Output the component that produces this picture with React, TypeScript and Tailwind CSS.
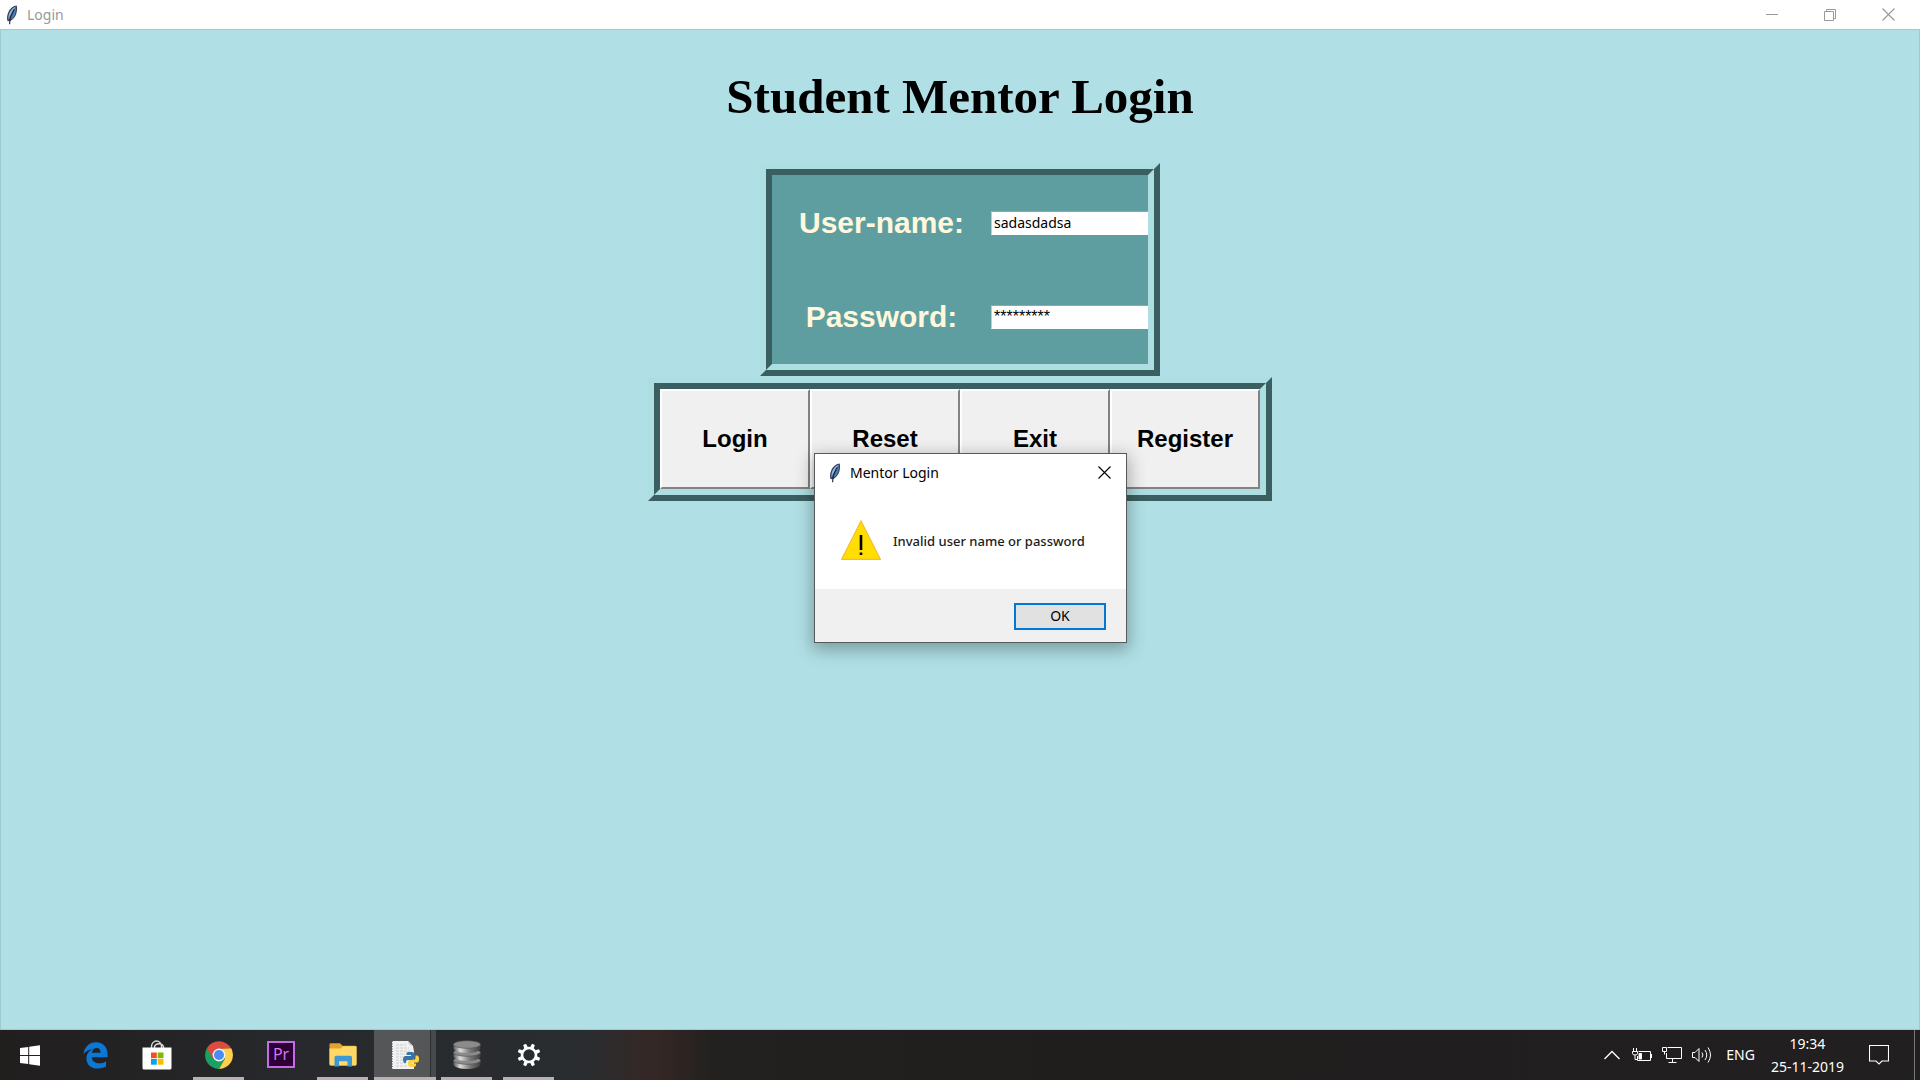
import React from "react";

function Feather() {
  return (
    <svg width="12" height="20" viewBox="0 0 12 20" aria-hidden="true">
      <path d="M10.600.6C7.400.8 4 3.400 2.300 7.200 1 10 .6 13.300 1.500 16l2 .2c3.600-1.300 6-4.400 7-8.200.7-2.700.9-5.400.1-7.400Z" fill="#34445e" />
      <path d="M10 1.400C7.300 2.200 4.900 4.600 3.600 7.600 2.600 10 2 12.500 2.600 14.800L8.200 4.400Z" fill="#8fb4e0" />
      <path d="M9.900 2.200C10.200 5 9.600 8.500 8 11.300c-1 1.700-2.300 3-3.800 3.700L7 8.600Z" fill="#4c7cba" />
      <path d="M8 4.500 4.300 11.800 3.600 19.200" fill="none" stroke="#1a2333" strokeWidth="1.100" />
    </svg>
  );
}

function CloseGlyph() {
  return (
    <svg width="13" height="13" viewBox="0 0 13 13" stroke="currentColor" fill="none" aria-hidden="true">
      <path d="M.5.5l12 12M12.500.5l-12 12" strokeWidth="1.100" />
    </svg>
  );
}

function TitleBar() {
  return (
    <header className="flex h-[29px] shrink-0 items-center bg-white pr-[3px] text-[#999999]">
      <div className="flex flex-1 items-center gap-[9px] pl-1.5">
        <Feather />
        <span className="text-sm">Login</span>
      </div>
      <button aria-label="Minimize" className="flex h-full w-[58px] items-center justify-center">
        <svg width="12" height="12" viewBox="0 0 12 12" stroke="currentColor"><path d="M0 5.500h12" /></svg>
      </button>
      <button aria-label="Restore" className="flex h-full w-[58px] items-center justify-center">
        <svg width="12" height="12" viewBox="0 0 12 12" fill="none" stroke="currentColor">
          <path d="M.5 2.500h9v9h-9ZM2.500 2.500v-2h9v9h-2" />
        </svg>
      </button>
      <button aria-label="Close" className="flex h-full w-[58px] items-center justify-center">
        <CloseGlyph />
      </button>
    </header>
  );
}

function Ridge({ children }: { children: React.ReactNode }) {
  return (
    <div className="border-6 border-t-[#addee1] border-r-[#3a5f60] border-b-[#3a5f60] border-l-[#addee1]">
      <div className="overflow-hidden border-6 border-t-[#3a5f60] border-r-[#addee1] border-b-[#addee1] border-l-[#3a5f60] bg-[#5f9ea0]">
        {children}
      </div>
    </div>
  );
}

const fieldClass =
  "h-6 w-[170px] border border-t-[#a0a0a0] border-r-white border-b-white border-l-[#c8c8c8] bg-white pl-0.5 text-black outline-none";
const labelClass = "text-center font-['Liberation_Sans',sans-serif] text-[30px] leading-9 font-bold text-[#fff8dc]";

function Credentials() {
  return (
    <Ridge>
      <div className="grid w-[376px] grid-cols-[219px_157px] grid-rows-[95px_94px] items-center">
        <label htmlFor="user" className={labelClass}>User-name:</label>
        <input id="user" defaultValue="sadasdadsa" className={`${fieldClass} text-sm`} />
        <label htmlFor="pass" className={labelClass}>Password:</label>
        <input id="pass" defaultValue="*********" autoComplete="off" className={`${fieldClass} font-['Liberation_Sans',sans-serif] text-base`} />
      </div>
    </Ridge>
  );
}

function Actions() {
  return (
    <Ridge>
      <div className="flex">
        {["Login", "Reset", "Exit", "Register"].map((name) => (
          <button
            key={name}
            className="h-[100px] w-[150px] border-2 border-t-white border-r-[#828282] border-b-[#828282] border-l-white bg-[#f0f0f0] font-['Liberation_Sans',sans-serif] text-2xl font-bold text-black"
          >
            {name}
          </button>
        ))}
      </div>
    </Ridge>
  );
}

function WarningDialog() {
  return (
    <section
      role="dialog"
      aria-label="Mentor Login"
      className="absolute top-[453px] left-[calc(50%-146px)] w-[313px] border border-[#555b5c] bg-white text-black shadow-[0_5px_16px_2px_rgba(0,0,0,0.3)]"
    >
      <div className="flex h-[37px] items-center gap-[9px] pr-[15px] pl-3.5">
        <Feather />
        <h2 className="flex-1 text-sm">Mentor Login</h2>
        <button aria-label="Close dialog"><CloseGlyph /></button>
      </div>
      <div className="flex h-[98px] items-center gap-3 pl-[26px]">
        <svg width="40" height="40" viewBox="0 0 40 40" aria-hidden="true">
          <path d="M20 1 39.300 39.300H.7Z" fill="#ffde00" stroke="#f9bd2b" strokeWidth="1.200" />
          <path d="M18.700 15h2.600v15h-2.600ZM18.700 32.500h2.600v2.500h-2.600Z" fill="#000" />
        </svg>
        <p className="pt-[3px] text-[13px] font-medium text-[#1c1c1c]">Invalid user name or password</p>
      </div>
      <div className="flex h-[53px] items-center justify-end bg-[#f0f0f0] pt-px pr-5">
        <button className="h-[27px] w-[92px] border-2 border-[#0078d7] bg-[#e1e1e1] text-sm leading-5">OK</button>
      </div>
    </section>
  );
}

const WindowsIcon = () => (
  <svg width="20" height="21" viewBox="0 0 20 21" fill="#fff">
    <path d="M0 3.100 8.200 2v8H0ZM9.200 1.800 20 .3V10H9.200ZM0 11h8.200v8L0 17.900ZM9.200 11H20v9.700L9.200 19.200Z" />
  </svg>
);

const EdgeIcon = () => (
  <svg width="25" height="27" viewBox="0 0 25 27">
    <path
      d="M.4 12.200C1.500 4.800 6.400.3 13.100.3 20.300.3 24.600 5.400 24.600 12.300v3H8.700c.3 4.300 3.600 6 7.500 6 2.500 0 4.700-.7 6.800-1.900v5.200c-2.300 1.300-5.100 1.900-8 1.900-7 0-11.500-3.900-11.500-10.100 0-4.300 2.300-7.400 6-9.200C5.700 7.500 2.500 9.400.4 12.200ZM8.900 10.700h8.700c0-3-1.300-4.700-4-4.700-2.500 0-4.200 1.700-4.700 4.700Z"
      fill="#0a78d6"
    />
  </svg>
);

const StoreIcon = () => (
  <svg width="30" height="30" viewBox="0 0 30 30">
    <path d="M9.500 10V6.500a5 5.500 0 0 1 10 0V10M12.500 10V6.500a5 5 0 0 1 9 0V10" fill="none" stroke="#d9d9d9" strokeWidth="1.400" />
    <path d="M.5 7.500h29V28q0 1.500-1.500 1.500H2Q.5 29.500.5 28Z" fill="#fff" />
    <path d="M9 12.500h5.800v5.700H9Z" fill="#f25022" />
    <path d="M15.700 12.500h5.800v5.700h-5.800Z" fill="#7fba00" />
    <path d="M9 19h5.800v5.700H9Z" fill="#00a4ef" />
    <path d="M15.700 19h5.800v5.700h-5.800Z" fill="#ffb900" />
  </svg>
);

const ChromeIcon = () => (
  <svg width="28" height="28" viewBox="0 0 28 28">
    <path d="M14 14 1.900 7A14 14 0 0 0 14 28l6-10.500Z" fill="#19a15f" />
    <path d="M14 14l6 3.500L14 28A14 14 0 0 0 26.100 7L14 7.500Z" fill="#ffd04b" />
    <path d="M14 14 8 17.400 1.900 7A14 14 0 0 1 26.100 7.500H14Z" fill="#dc4c3f" />
    <circle cx="14" cy="14" r="6.400" fill="#f2f2f2" />
    <circle cx="14" cy="14" r="5" fill="#4b8bf5" />
  </svg>
);

const PremiereIcon = () => (
  <span className="mb-0.5 flex h-[27px] w-7 items-center justify-center border-2 border-[#c66ae8] bg-[#2c0034] font-['Open_Sans',sans-serif] text-base leading-5 font-medium text-[#d67cf4]">
    Pr
  </span>
);

const ExplorerIcon = () => (
  <svg width="28" height="24" viewBox="0 0 28 24">
    <path d="M.5 1.500Q.5.3 1.700.3H11l2.500 2.400H26q1.500 0 1.500 1.500V21q0 1.500-1.500 1.500H2Q.5 22.500.5 21Z" fill="#e0a528" />
    <path d="M.5 5.500H11.500L14 3.300H27.500V21q0 1.500-1.500 1.500H2Q.5 22.500.5 21Z" fill="#ffd868" />
    <path d="M5.500 23.500V14.500q0-1.700 1.700-1.700H21.300q1.700 0 1.700 1.700v9H18.500V18.300h-8.500v5.200Z" fill="#3f97d3" />
  </svg>
);

const PythonFileIcon = () => (
  <svg width="30" height="30" viewBox="0 0 30 30">
    <path d="M2 1h16l5 5q1.500 5 1 12V29H2Z" fill="#f1f1f1" />
    <path d="M18 1q0 5 5 5" fill="#cfcfcf" />
    <path d="M2.500 1v28" stroke="#7c7c7c" strokeDasharray="1 1.500" />
    <path d="M6 5h10M6 8h13M6 11h14M6 14h9M6 17h8M6 20h8M6 23h10M6 26h12" stroke="#cdcdcd" strokeDasharray="3 1" />
    <path d="M18 12h4q2.500 0 2.500 2.500V18q0 2-2.500 2h-4q-2 0-2 2v1h-1q-2 0-2-3.500T15.500 16H21v-1h-4.500v-1.500Q16.500 12 18 12Z" fill="#3874a8" />
    <path d="M25.500 15.500h1.500q2 0 2 3.500t-2 3.500h-5.500v1H26V25q0 2-3.500 2T18 25v-3q0-2 2-2h3.500q2 0 2-2Z" fill="#ffd43b" />
  </svg>
);

const DatabaseIcon = () => (
  <svg width="28" height="30" viewBox="0 0 28 30">
    <defs>
      <linearGradient id="metal">
        <stop offset="0" stopColor="#5b5b5b" />
        <stop offset=".25" stopColor="#dcdcdc" />
        <stop offset=".6" stopColor="#7a7a7a" />
        <stop offset="1" stopColor="#404040" />
      </linearGradient>
    </defs>
    {[19.5, 11.5, 3.5].map((y) => (
      <g key={y}>
        <path d={`M.5 ${y + 1}v4.500q3 4 13.500 4t13.500-4V${y + 1}Z`} fill="url(#metal)" />
        <ellipse cx="14" cy={y + 1} rx="13.500" ry="3.800" fill="#8b8b8b" stroke="#4c4c4c" strokeWidth=".6" />
      </g>
    ))}
  </svg>
);

const SettingsIcon = () => (
  <svg width="24" height="24" viewBox="-12 -12 24 24">
    <circle r="7" fill="none" stroke="#fff" strokeWidth="2.600" />
    {[22.5, 67.5, 112.5, 157.5, 202.5, 247.5, 292.5, 337.5].map((a) => (
      <path key={a} d="M-1.900-7.500-1.500-11.500h3L1.900-7.500Z" fill="#fff" transform={`rotate(${a})`} />
    ))}
  </svg>
);

const apps = [
  { name: "Edge", Icon: EdgeIcon, state: "idle" },
  { name: "Store", Icon: StoreIcon, state: "idle" },
  { name: "Chrome", Icon: ChromeIcon, state: "open" },
  { name: "Premiere Pro", Icon: PremiereIcon, state: "idle" },
  { name: "File Explorer", Icon: ExplorerIcon, state: "open" },
  { name: "Python", Icon: PythonFileIcon, state: "active" },
  { name: "Database", Icon: DatabaseIcon, state: "open" },
  { name: "Settings", Icon: SettingsIcon, state: "open" },
];

function Taskbar() {
  return (
    <footer className="flex h-[50px] shrink-0 bg-[linear-gradient(90deg,#211e1e_0,#27292c_300px,#2a2d30_580px,#352725_655px,#23211f_710px,#201e1d_1100px,#211f20_100%)] text-white">
      <button aria-label="Start" className="flex w-16 items-center justify-center pr-1">
        <WindowsIcon />
      </button>
      {apps.map(({ name, Icon, state }) => (
        <button
          key={name}
          aria-label={name}
          className={
            state === "active"
              ? "relative flex w-[62px] items-center justify-center bg-[linear-gradient(90deg,#545657_56px,#2c2e30_56px,#2c2e30_57px,#47494b_57px)]"
              : "relative flex w-[62px] items-center justify-center"
          }
        >
          <Icon />
          {state === "open" && <span className="absolute bottom-0 left-[5px] h-[3px] w-[51px] bg-[#b8b0b2]" />}
          {state === "active" && <span className="absolute bottom-0 left-0 h-[3px] w-full bg-[#b8b0b2]" />}
        </button>
      ))}
      <div className="ml-auto flex items-center">
        <button aria-label="Show hidden icons" className="mr-3">
          <svg width="16" height="10" viewBox="0 0 16 10" fill="none" stroke="#fff" strokeWidth="1.300"><path d="M.5 9 8 1.500 15.500 9" /></svg>
        </button>
        <button aria-label="Battery" className="mr-2.5">
          <svg width="20" height="14" viewBox="0 0 20 14" fill="none" stroke="#fff">
            <path d="M6.500 3.500h12v9h-13V8M19.500 6v4M1.500 0v3M4.500 0v3M.5 3.500h5v2q0 1.500-2.500 1.500T.5 5.500ZM3 7v4.500h2.500" />
            <path d="M7 5.500h2.500v5.500H7Z" fill="#fff" />
          </svg>
        </button>
        <button aria-label="Network" className="mr-2.5">
          <svg width="20" height="16" viewBox="0 0 20 16" fill="none" stroke="#fff">
            <path d="M5.500.5h14v11h-15V6M.5.500h4v4h-4ZM2.500 4.500v3M10.500 11.500v4M6.500 15.500h8" />
          </svg>
        </button>
        <button aria-label="Volume" className="mr-3.5">
          <svg width="20" height="18" viewBox="0 0 20 18" fill="none" stroke="#fff">
            <path d="M.5 6.500h2.500l4-4v13l-4-4H.5ZM10 6.500q1.800 2.500 0 5M13 4q3.500 5 0 10M16 1.500q5 7.500 0 15" />
          </svg>
        </button>
        <button className="mr-4 text-sm">ENG</button>
        <button className="mr-[25px] text-center text-sm leading-[23px]">
          <span className="block">19:34</span>
          <span className="block">25-11-2019</span>
        </button>
        <button aria-label="Notifications" className="mr-[25px]">
          <svg width="20" height="20" viewBox="0 0 20 20" fill="none" stroke="#fff">
            <path d="M.5.500h19v15.500H13l-3 3-3-3H.5Z" strokeWidth="1.100" />
          </svg>
        </button>
        <button aria-label="Show desktop" className="h-[50px] w-1.5 border-l border-[#77777a]" />
      </div>
    </footer>
  );
}

export default function App() {
  return (
    <div className="relative flex min-h-screen flex-col font-['Noto_Sans',sans-serif]">
      <TitleBar />
      <main className="flex flex-1 flex-col items-center gap-px border border-[#9fcace] bg-[#b0e0e6]">
        <h1 className="pt-[39px] pb-[37px] font-['Liberation_Serif',serif] text-[49px] leading-14 font-bold text-black">
          Student Mentor Login
        </h1>
        <Credentials />
        <Actions />
      </main>
      <WarningDialog />
      <Taskbar />
    </div>
  );
}
